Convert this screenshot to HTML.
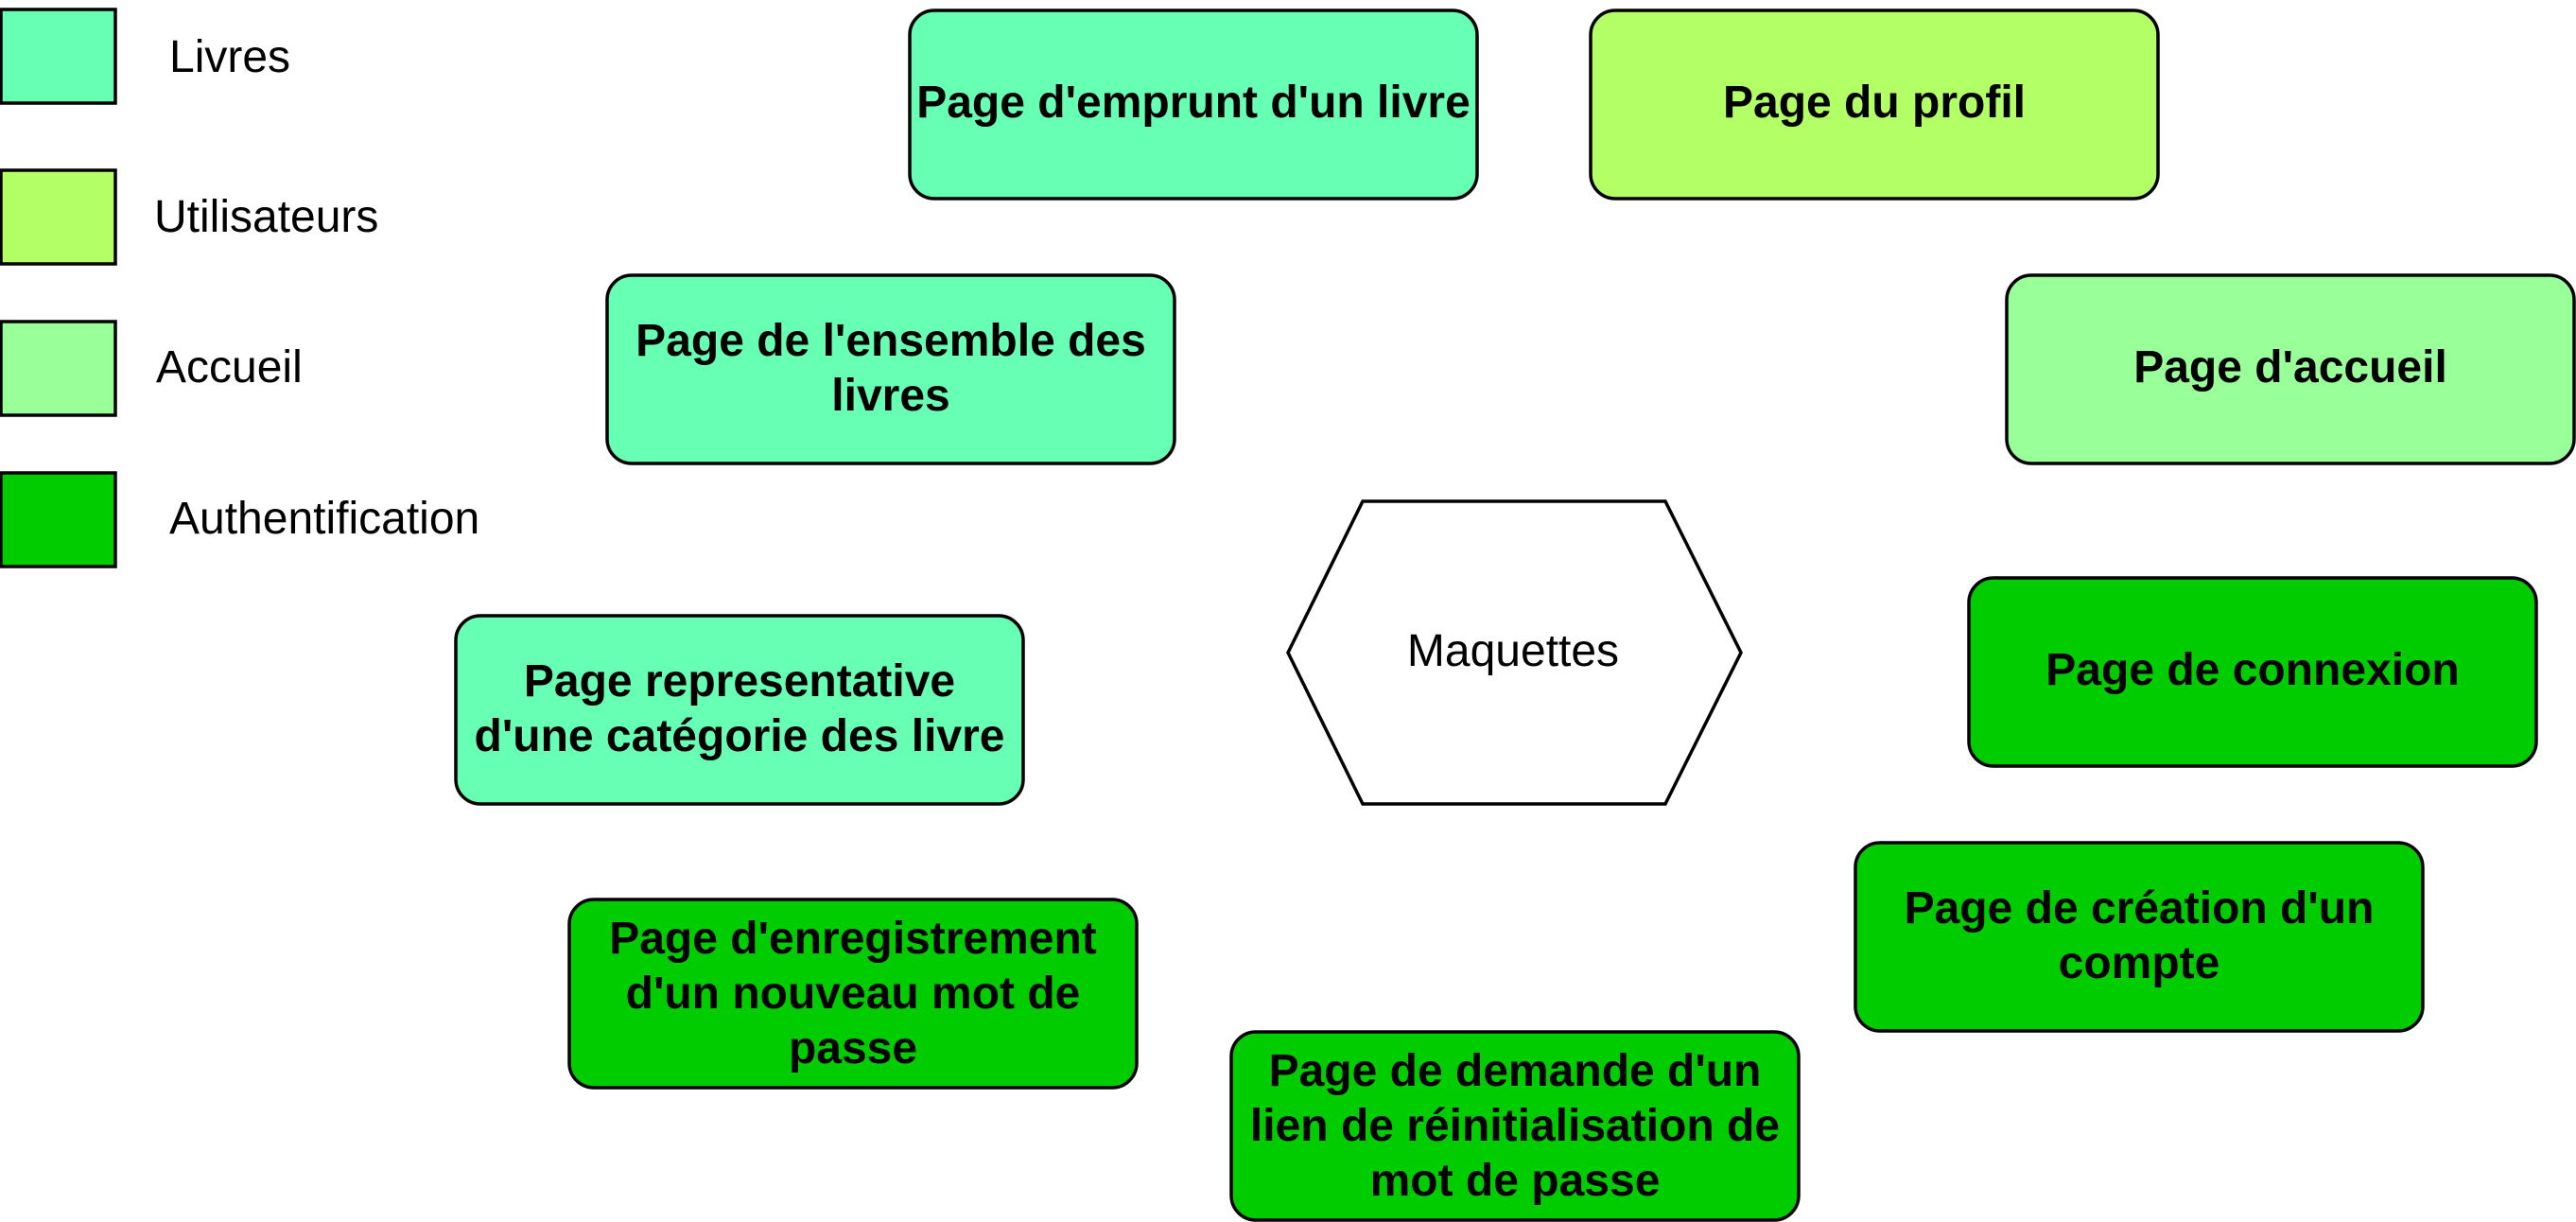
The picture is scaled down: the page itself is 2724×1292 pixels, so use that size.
<!DOCTYPE html>
<html><head><meta charset="utf-8"><style>
html,body{margin:0;padding:0;background:#fff;width:2724px;height:1292px;overflow:hidden}
</style></head><body>
<svg width="2724" height="1292" viewBox="0 0 2724 1292" xmlns="http://www.w3.org/2000/svg" font-family="Liberation Sans, sans-serif">
<g stroke="#000" stroke-width="3.5">
<rect x="1" y="10" width="121" height="99" fill="#66FFB3"/>
<rect x="1" y="180" width="121" height="99" fill="#B3FF66"/>
<rect x="1" y="340" width="121" height="99" fill="#99FF99"/>
<rect x="1" y="500" width="121" height="99" fill="#00CC00"/>
<rect x="962" y="11" width="600" height="199" rx="26" fill="#66FFB3"/>
<rect x="1682" y="11" width="600" height="199" rx="26" fill="#B3FF66"/>
<rect x="642" y="291" width="600" height="199" rx="26" fill="#66FFB3"/>
<rect x="2122" y="291" width="600" height="199" rx="26" fill="#99FF99"/>
<rect x="482" y="651" width="600" height="199" rx="26" fill="#66FFB3"/>
<rect x="2082" y="611" width="600" height="199" rx="26" fill="#00CC00"/>
<rect x="1962" y="891" width="600" height="199" rx="26" fill="#00CC00"/>
<rect x="602" y="951" width="600" height="199" rx="26" fill="#00CC00"/>
<rect x="1302" y="1091" width="600" height="199" rx="26" fill="#00CC00"/>
<polygon points="1441,530 1761,530 1841,690 1761,850 1441,850 1362,690" fill="#fff"/>
</g>
<g font-size="48" fill="#000">
<text x="179" y="76">Livres</text>
<text x="163" y="245">Utilisateurs</text>
<text x="165" y="404">Accueil</text>
<text x="179" y="564">Authentification</text>
<text x="1600" y="704" text-anchor="middle">Maquettes</text>
</g>
<g font-size="48" font-weight="bold" fill="#000" text-anchor="middle">
<text x="1262" y="124">Page d'emprunt d'un livre</text>
<text x="1982" y="124">Page du profil</text>
<text x="942" y="376">Page de l'ensemble des</text>
<text x="942" y="434">livres</text>
<text x="2422" y="404">Page d'accueil</text>
<text x="782" y="736">Page representative</text>
<text x="782" y="794">d'une catégorie des livre</text>
<text x="2382" y="724">Page de connexion</text>
<text x="2262" y="976">Page de création d'un</text>
<text x="2262" y="1034">compte</text>
<text x="902" y="1008">Page d'enregistrement</text>
<text x="902" y="1066">d'un nouveau mot de</text>
<text x="902" y="1124">passe</text>
<text x="1602" y="1148">Page de demande d'un</text>
<text x="1602" y="1206">lien de réinitialisation de</text>
<text x="1602" y="1264">mot de passe</text>
</g>
</svg>
</body></html>
